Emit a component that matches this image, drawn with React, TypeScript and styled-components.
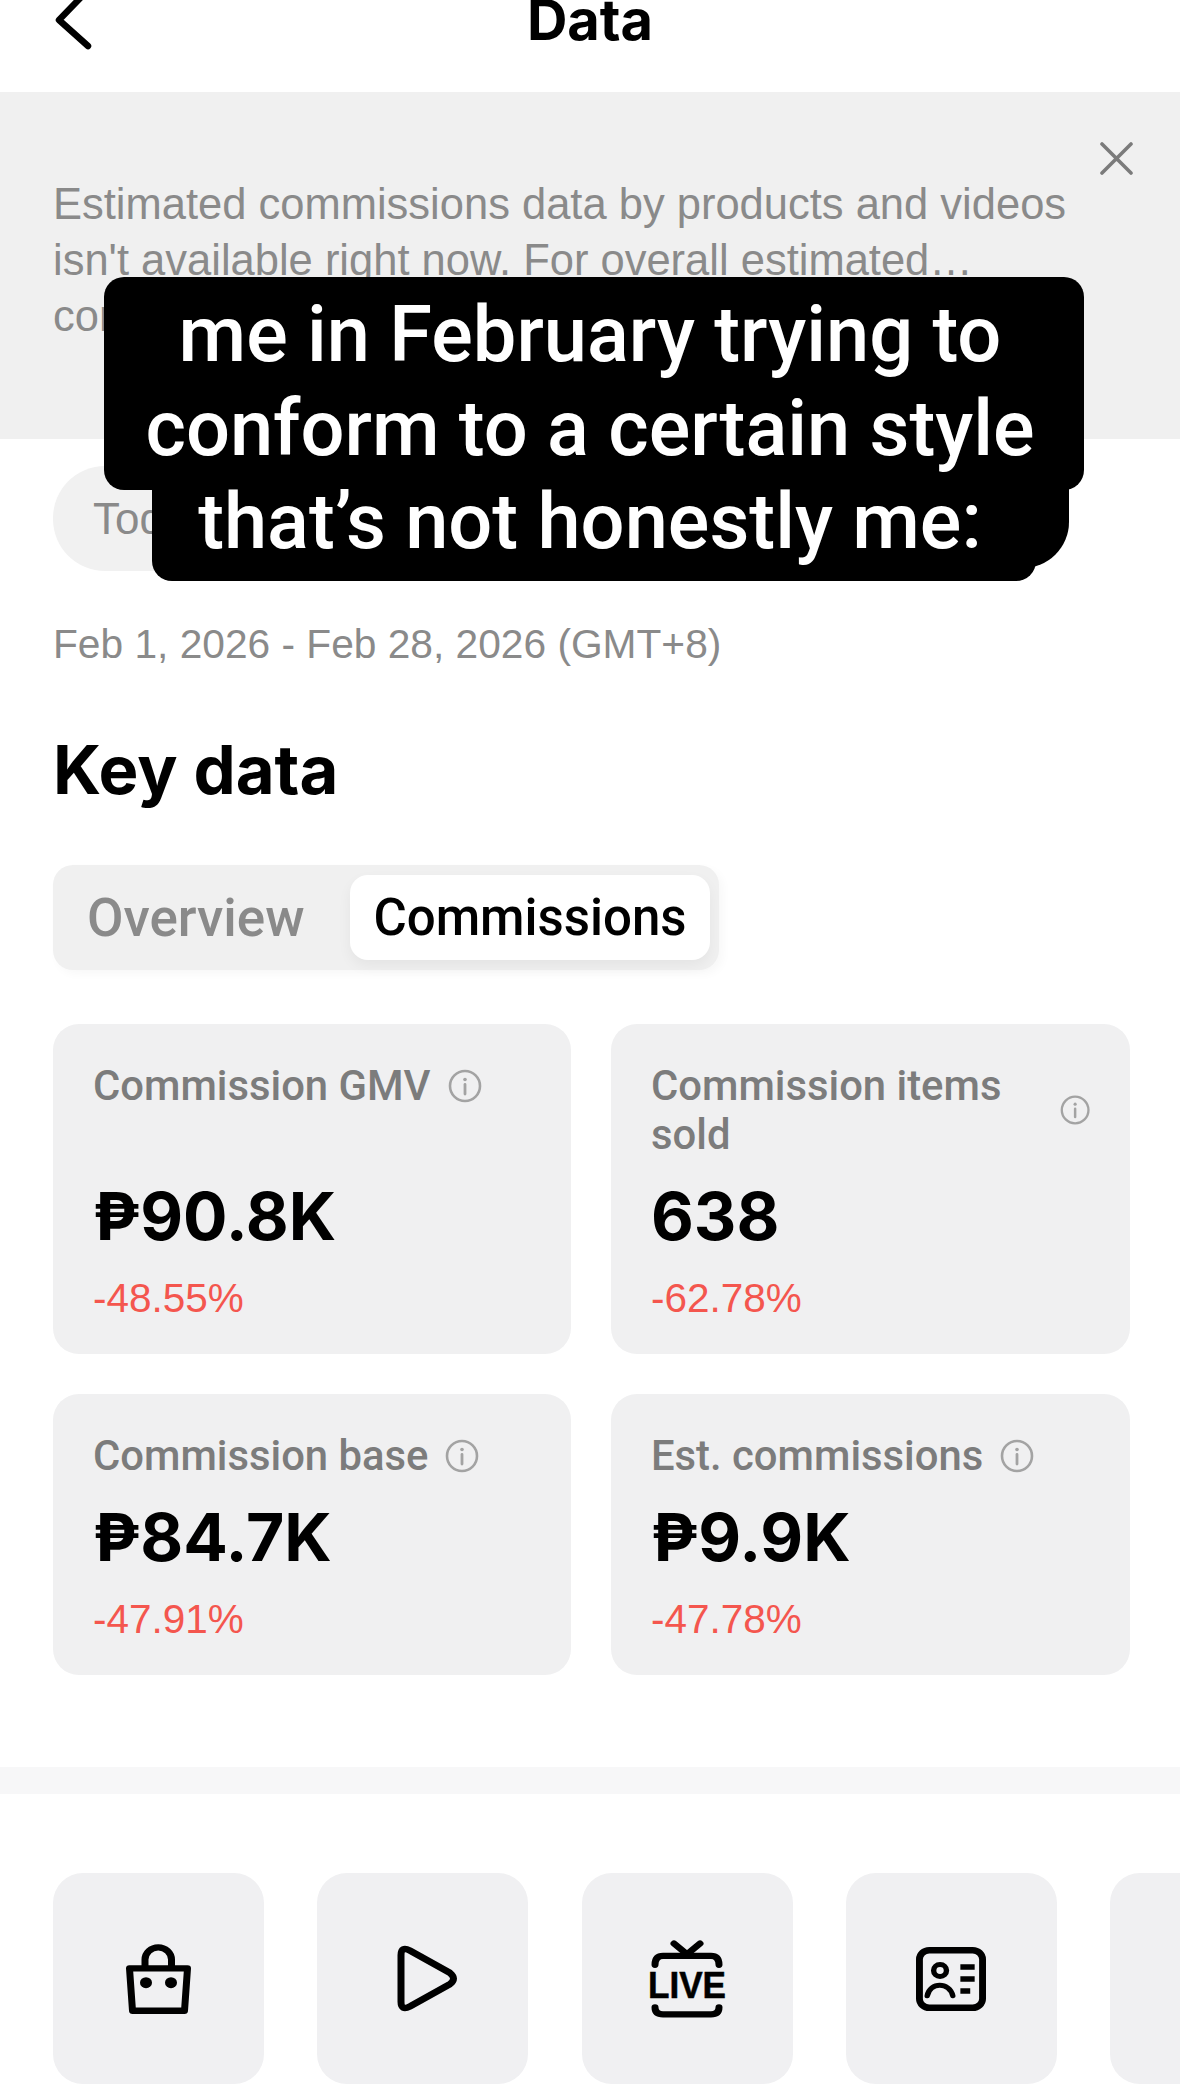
import styled, { createGlobalStyle } from "styled-components";

const GlobalStyle = createGlobalStyle`
  html, body {
    margin: 0;
    padding: 0;
    background: #fff;
  }
  * {
    box-sizing: border-box;
  }
`;

const Page = styled.div`
  position: relative;
  width: 1180px;
  height: 2096px;
  overflow: hidden;
  background: #fff;
  font-family: "Liberation Sans", Arial, sans-serif;
  color: #000;
`;

/* header */

const Header = styled.header`
  display: flex;
  justify-content: center;
  height: 92px;
  position: relative;
`;

const BackIcon = styled.svg`
  position: absolute;
  left: 52px;
  top: -12px;
`;

const Title = styled.h1`
  margin: 0;
  font-family: Inter, sans-serif;
  font-size: 56px;
  font-weight: 700;
  line-height: 40px;
`;

/* banner */

const Banner = styled.section`
  height: 347px;
  padding: 50px 47px 0 53px;
  background: #f0f0f0;
`;

const BannerTop = styled.div`
  display: flex;
  justify-content: flex-end;
`;

const BannerText = styled.p`
  margin: 1px 0 0;
  font-size: 43.5px;
  line-height: 56px;
  color: #8a8a8a;
  white-space: nowrap;
`;

/* key data */

const Content = styled.main`
  padding: 27px 50px 0 53px;
`;

const Pill = styled.div`
  display: inline-flex;
  align-items: center;
  height: 105px;
  padding: 0 40px;
  border-radius: 52px;
  background: #f1f1f1;
  font-size: 44px;
  color: #8a8a8a;
`;

const DateRange = styled.div`
  margin-top: 49px;
  font-size: 40.7px;
  line-height: 48px;
  color: #8a8a8a;
`;

const SectionTitle = styled.h2`
  margin: 66px 0 0;
  font-family: Inter, sans-serif;
  font-size: 67px;
  font-weight: 700;
  line-height: 72px;
`;

const Tabs = styled.div`
  display: flex;
  align-items: center;
  width: 666px;
  height: 105px;
  margin-top: 59px;
  padding: 0 9px 0 34px;
  border-radius: 20px;
  background: #f0f0f0;
  box-shadow: 4px 4px 10px rgba(0, 0, 0, 0.03);
`;

const Tab = styled.div<{ $active?: boolean }>`
  display: flex;
  align-items: center;
  justify-content: center;
  margin-left: auto;
  height: 85px;
  font-family: Roboto, sans-serif;
  font-size: ${(p) => (p.$active ? "51px" : "53px")};
  font-weight: 500;
  color: ${(p) => (p.$active ? "#000" : "#8a8a8a")};
  background: ${(p) => (p.$active ? "#fff" : "transparent")};
  width: ${(p) => (p.$active ? "360px" : "auto")};
  border-radius: 18px;
  box-shadow: ${(p) => (p.$active ? "0 6px 14px rgba(0, 0, 0, 0.05)" : "none")};

  &:first-child {
    margin-left: 0;
  }
`;

const CardGrid = styled.div`
  display: grid;
  grid-template-columns: 518px 519px;
  gap: 40px;
  margin-top: 54px;
`;

const Card = styled.div`
  display: flex;
  flex-direction: column;
  padding: 37px 40px 34px;
  border-radius: 26px;
  background: #f0f0f1;
`;

const CardHead = styled.div`
  display: flex;
  align-items: center;
  gap: 17px;
  margin-bottom: auto;
`;

const CardLabel = styled.div`
  font-family: Roboto, sans-serif;
  font-size: 41.8px;
  font-weight: 500;
  line-height: 49px;
  color: #7c7c7c;
`;

const CardValue = styled.div`
  margin-top: 25px;
  font-family: Inter, sans-serif;
  font-size: 66px;
  font-weight: 700;
  line-height: 64px;
`;

const CardChange = styled.div`
  margin-top: 28px;
  font-size: 40.5px;
  line-height: 44px;
  color: #f4564e;
`;

const InfoIcon = styled.svg`
  flex: 0 1 34px;
`;

const Divider = styled.div`
  height: 27px;
  margin-top: 92px;
  background: #f7f7f8;
`;

/* shortcuts */

const TileRow = styled.div`
  display: flex;
  gap: 53.3px;
  margin-top: 79px;
  padding-left: 53px;
`;

const Tile = styled.div`
  display: flex;
  flex: 0 0 211px;
  align-items: center;
  justify-content: center;
  height: 211px;
  border-radius: 30px;
  background: #f0f0f2;
`;

const PlayIcon = styled.svg`
  margin-left: 10px;
`;

/* caption over the screenshot */

const Caption = styled.div`
  position: absolute;
  top: 277px;
  left: 104px;
  width: 980px;
  color: #fff;
  font-family: Roboto, sans-serif;
  font-size: 77.6px;
  font-weight: 500;
  text-align: center;
  line-height: 94px;
`;

const CaptionTop = styled.div`
  position: relative;
  z-index: 1;
  height: 213px;
  padding: 11px 8px 0 0;
  background: #000;
  border-radius: 20px;
`;

const CaptionBottom = styled.div`
  position: relative;
  width: 884px;
  height: 91px;
  margin-left: 48px;
  background: #000;
  border-radius: 0 0 20px 20px;
  line-height: 64px;

  &::after {
    content: "";
    position: absolute;
    top: -20px;
    right: -33px;
    width: 90px;
    height: 98px;
    background: #000;
    border-radius: 0 0 46px 20px;
    z-index: 0;
  }

  span {
    position: relative;
    z-index: 1;
    margin-left: -8px;
  }
`;

const Info = () => (
  <InfoIcon width="34" height="34" viewBox="0 0 34 34" fill="none">
    <circle cx="17" cy="17" r="15" stroke="#a3a3a3" strokeWidth="2.6" />
    <circle cx="17" cy="10.5" r="1.8" fill="#a3a3a3" />
    <path d="M17 15.5v9.5" stroke="#a3a3a3" strokeWidth="2.8" strokeLinecap="round" />
  </InfoIcon>
);

const cards = [
  { label: "Commission GMV", value: "₱90.8K", change: "-48.55%" },
  { label: "Commission items sold", value: "638", change: "-62.78%" },
  { label: "Commission base", value: "₱84.7K", change: "-47.91%" },
  { label: "Est. commissions", value: "₱9.9K", change: "-47.78%" },
];

function App() {
  return (
    <Page>
      <GlobalStyle />
      <Header>
        <BackIcon width="44" height="64" viewBox="0 0 44 64" fill="none">
          <path d="M36 2 L7 32 L36 58" stroke="#000" strokeWidth="6.5" strokeLinecap="round" strokeLinejoin="round" />
        </BackIcon>
        <Title>Data</Title>
      </Header>

      <Banner>
        <BannerTop>
          <svg width="33" height="33" viewBox="0 0 33 33" fill="none">
            <path d="M2 2 L31 31 M31 2 L2 31" stroke="#7b7b7b" strokeWidth="3.6" strokeLinecap="round" />
          </svg>
        </BannerTop>
        <BannerText>
          Estimated commissions data by products and videos
          <br />
          isn't available right now. For overall estimated…
          <br />
          commissions
        </BannerText>
      </Banner>

      <Content>
        <Pill>Today</Pill>
        <DateRange>Feb 1, 2026 - Feb 28, 2026 (GMT+8)</DateRange>
        <SectionTitle>Key data</SectionTitle>
        <Tabs>
          <Tab>Overview</Tab>
          <Tab $active>Commissions</Tab>
        </Tabs>
        <CardGrid>
          {cards.map((card) => (
            <Card key={card.label}>
              <CardHead>
                <CardLabel>{card.label}</CardLabel>
                <Info />
              </CardHead>
              <CardValue>{card.value}</CardValue>
              <CardChange>{card.change}</CardChange>
            </Card>
          ))}
        </CardGrid>
      </Content>

      <Divider />

      <TileRow>
        <Tile>
          <svg width="66" height="72" viewBox="66 44 66 78" preserveAspectRatio="none" fill="none" stroke="#000" strokeWidth="7" strokeLinejoin="round">
            <path d="M69.5 71.5 H127.5 L124.5 117.5 H72.5 Z" />
            <path d="M85 71 V62 A13.2 13.2 0 0 1 111.5 62 V71" />
            <circle cx="86" cy="87" r="6" fill="#000" stroke="none" />
            <circle cx="111" cy="87" r="6" fill="#000" stroke="none" />
          </svg>
        </Tile>
        <Tile>
          <PlayIcon width="61" height="67" viewBox="337 48 61 72" preserveAspectRatio="none" fill="none" stroke="#000" strokeWidth="7" strokeLinejoin="round">
            <path d="M341 59 Q341 49 350 54 L390 78 Q397 84 390 90 L350 114 Q341 119 341 109 Z" />
          </PlayIcon>
        </Tile>
        <Tile>
          <svg width="78" height="78" viewBox="48 42 78 88" preserveAspectRatio="none" fill="none" stroke="#000" strokeWidth="7" strokeLinecap="round">
            <path d="M74 46 L87 58 L100 46" />
            <path d="M55 70 Q55 60 63 60 H111 Q119 60 119 70" />
            <path d="M55 118 Q55 126 63 126 H111 Q119 126 119 118" />
            <text x="48" y="108" textLength="78" lengthAdjust="spacingAndGlyphs" fill="#000" stroke="#000" strokeWidth="0.6" fontFamily="'Liberation Sans', sans-serif" fontWeight="700" fontSize="41">
              LIVE
            </text>
          </svg>
        </Tile>
        <Tile>
          <svg width="70" height="64" viewBox="316 52 71 70" preserveAspectRatio="none" fill="none" stroke="#000" strokeWidth="7">
            <rect x="319.5" y="55.5" width="64" height="63" rx="10" />
            <circle cx="340.4" cy="77.7" r="6.5" strokeWidth="5.5" />
            <path d="M327.4 105.4 C330 90 350 90 353.3 105.4" strokeWidth="5.5" strokeLinecap="round" />
            <path d="M361 74 H375.5 M361 87 H375.5 M361 100 H371" strokeWidth="6" />
          </svg>
        </Tile>
        <Tile />
      </TileRow>

      <Caption>
        <CaptionTop>
          me in February trying to
          <br />
          conform to a certain style
        </CaptionTop>
        <CaptionBottom>
          <span>that’s not honestly me:</span>
        </CaptionBottom>
      </Caption>
    </Page>
  );
}

export default App;
